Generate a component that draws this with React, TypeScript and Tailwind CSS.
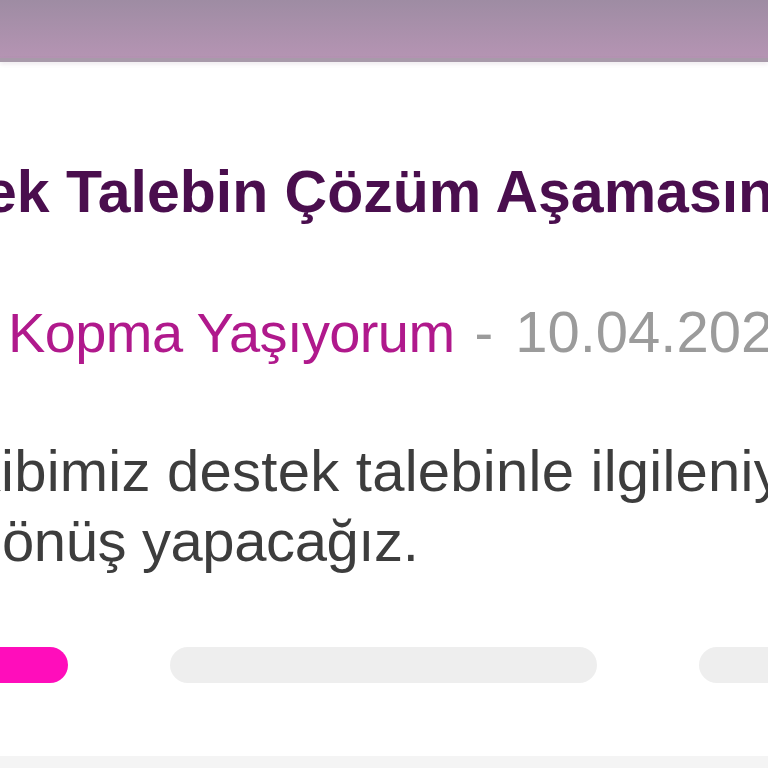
import React from "react";

// Hidden prefix: sits in a zero-width box and overflows to the left, so the
// visible text starts exactly at the line's left padding.
function Prefix({ children }: { children: React.ReactNode }) {
  return (
    <span className="flex w-0 shrink-0 justify-end whitespace-pre">{children}</span>
  );
}

export default function App() {
  const steps = [true, false, false];

  return (
    <div
      className="flex h-[768px] w-[768px] flex-col overflow-hidden bg-white"
      style={{ fontFamily: '"Liberation Sans", Arial, sans-serif' }}
    >
      {/* Header band */}
      <div className="h-[58px] shrink-0 bg-gradient-to-b from-[#9e8ca3] to-[#b594b3]" />
      <div className="h-[4px] shrink-0 bg-[#a89aaa] shadow-[0_2px_4px_rgba(120,90,120,0.15)]" />

      {/* Card body */}
      <div className="flex flex-1 flex-col pt-[94px]">
        <h1 className="-ml-4 flex whitespace-nowrap text-[59px] font-bold leading-[72px] text-[#4a0e4e]">
          <Prefix>Dest</Prefix>
          <span>ek Talebin Çözüm Aşamasında</span>
        </h1>

        <div className="mt-[69px] flex items-baseline whitespace-nowrap pl-[8px] leading-[70px]">
          <Prefix>
            <span className="text-[56px] tracking-[-0.6px]">Bağlantı </span>
          </Prefix>
          <span className="text-[56px] tracking-[-0.6px] text-[#b0198c]">Kopma Yaşıyorum</span>
          <span className="pl-[20px] pr-[22px] text-[56px] text-[#9b9b9b]">-</span>
          <span className="text-[58px] text-[#9b9b9b]">10.04.2024</span>
        </div>

        <div className="mt-[68px] flex flex-col text-[58px] leading-[70px] text-[#3d3d3d]">
          <div className="flex whitespace-nowrap pl-[1px] tracking-[0.25px]">
            <Prefix>Ek</Prefix>
            <span>ibimiz destek talebinle ilgileniyor. En kısa sürede</span>
          </div>
          <div className="flex whitespace-nowrap pl-[2px] tracking-[-0.4px]">
            <Prefix>d</Prefix>
            <span>önüş yapacağız.</span>
          </div>
        </div>

        {/* Progress steps */}
        <div className="mt-[71px] ml-[-359px] flex gap-[102px]">
          {steps.map((active, i) => (
            <div
              key={i}
              className={
                active
                  ? "h-[36px] w-[427px] shrink-0 rounded-full bg-[#ff0dbb]"
                  : "h-[36px] w-[427px] shrink-0 rounded-full bg-[#eeeeee]"
              }
            />
          ))}
        </div>

        <div className="mt-[73px] flex-1 bg-[#f4f4f4]" />
      </div>
    </div>
  );
}
